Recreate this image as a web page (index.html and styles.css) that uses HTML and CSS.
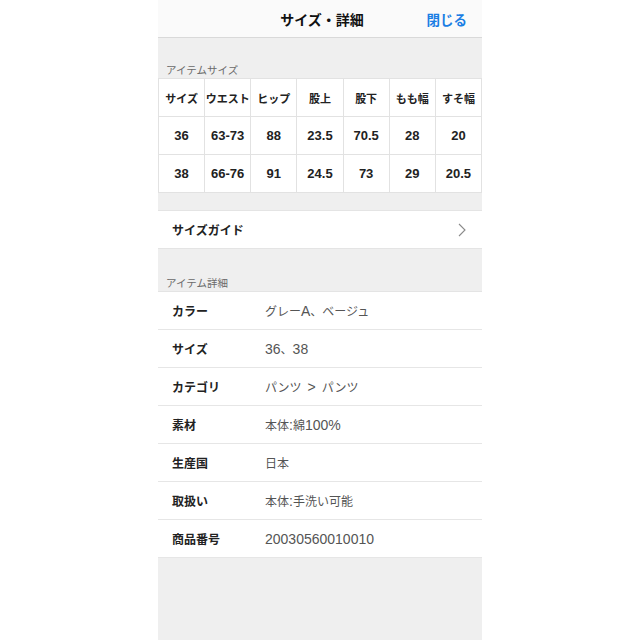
FILE: index.html
```html
<!DOCTYPE html>
<html lang="ja">
<head>
<meta charset="utf-8">
<link rel="stylesheet" href="styles.css">
</head>
<body>
<div class="screen">
  <header class="topbar">
    <div class="title">サイズ・詳細</div>
    <div class="close">閉じる</div>
  </header>

  <div class="section-label first">アイテムサイズ</div>
  <table class="size-table">
    <tr class="head">
      <td>サイズ</td><td>ウエスト</td><td>ヒップ</td><td>股上</td><td>股下</td><td>もも幅</td><td>すそ幅</td>
    </tr>
    <tr>
      <td>36</td><td>63-73</td><td>88</td><td>23.5</td><td>70.5</td><td>28</td><td>20</td>
    </tr>
    <tr>
      <td>38</td><td>66-76</td><td>91</td><td>24.5</td><td>73</td><td>29</td><td>20.5</td>
    </tr>
  </table>

  <div class="guide">
    <span>サイズガイド</span>
    <svg class="chev" width="8" height="14" viewBox="0 0 8 14"><path d="M1 1 L7 7 L1 13" fill="none" stroke="#8a8a8a" stroke-width="1.1"/></svg>
  </div>

  <div class="section-label second">アイテム詳細</div>
  <div class="details">
    <div class="row"><span class="k">カラー</span><span class="v">グレー<span class="num">A</span>、ベージュ</span></div>
    <div class="row"><span class="k">サイズ</span><span class="v"><span class="num">36</span>、<span class="num">38</span></span></div>
    <div class="row"><span class="k">カテゴリ</span><span class="v">パンツ<span class="num sep">&gt;</span>パンツ</span></div>
    <div class="row"><span class="k">素材</span><span class="v">本体<span class="num">:</span>綿<span class="num">100%</span></span></div>
    <div class="row"><span class="k">生産国</span><span class="v">日本</span></div>
    <div class="row"><span class="k">取扱い</span><span class="v">本体<span class="num">:</span>手洗い可能</span></div>
    <div class="row"><span class="k">商品番号</span><span class="v"><span class="num">20030560010010</span></span></div>
  </div>
</div>
</body>
</html>
```

FILE: styles.css
```css
html, body {
  margin: 0;
  padding: 0;
  background: #ffffff;
}
body {
  font-family: "Noto Sans CJK JP", "Noto Sans", sans-serif;
  color: #222;
}
.screen {
  width: 324px;
  height: 640px;
  margin-left: 158px;
  background: #efefef;
}
.topbar {
  height: 37px;
  background: #fafafa;
  border-bottom: 1px solid #d9d9d9;
  display: flex;
  align-items: center;
  justify-content: center;
  position: relative;
}
.title {
  font-size: 14px;
  font-weight: 700;
  color: #111;
  padding-left: 4px;
}
.close {
  position: absolute;
  right: 15px;
  top: 9px;
  font-size: 13.5px;
  font-weight: 700;
  color: #1a7ee4;
}
.section-label {
  font-size: 10.5px;
  color: #6a6a6a;
  line-height: 16px;
  padding-left: 8px;
}
.section-label.first {
  padding-top: 24px;
}
.section-label.second {
  padding-top: 26px;
}
.size-table {
  width: 324px;
  table-layout: fixed;
  border-collapse: collapse;
  background: #fff;
}
.size-table td {
  border: 1px solid #e2e2e2;
  height: 37px;
  padding: 0;
  text-align: center;
  font-family: "Liberation Sans", "Noto Sans CJK JP", sans-serif;
  font-size: 13px;
  font-weight: 700;
  color: #222;
}
.size-table tr.head td {
  font-family: "Noto Sans CJK JP", sans-serif;
  font-size: 11px;
}
.guide {
  margin-top: 17px;
  height: 37px;
  background: #fff;
  border-top: 1px solid #e4e4e4;
  border-bottom: 1px solid #e4e4e4;
  display: flex;
  align-items: center;
  justify-content: space-between;
  padding: 0 16px 0 14px;
  font-size: 12px;
  font-weight: 700;
  color: #222;
}
.chev {
  display: block;
}
.details {
  background: #fff;
  border-top: 1px solid #e4e4e4;
}
.row {
  height: 37px;
  border-bottom: 1px solid #e6e6e6;
  display: flex;
  align-items: center;
  padding-left: 14px;
  font-size: 12px;
}
.row .k {
  width: 93px;
  font-weight: 700;
  color: #222;
}
.row .v {
  color: #555;
}
.num {
  font-family: "Liberation Sans", sans-serif;
  font-size: 14px;
}
.sep {
  padding: 0 6px;
}
```
